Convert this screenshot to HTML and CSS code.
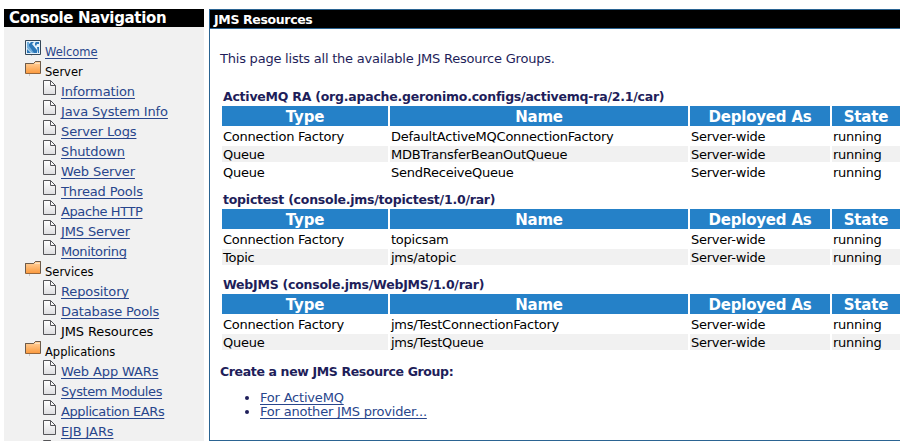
FILE: index.html
```
<!DOCTYPE html>
<html lang="en">
<head>
<meta charset="utf-8">
<title>JMS Resources</title>
<link rel="stylesheet" href="styles.css">
</head>
<body>
<svg class="defs" aria-hidden="true">
  <defs>
    <linearGradient id="orange" x1="0" y1="0" x2="0" y2="1"><stop offset="0" stop-color="#ffd3a0"/><stop offset="1" stop-color="#fb993c"/></linearGradient>
    <linearGradient id="paper" x1="0" y1="0" x2="0" y2="1"><stop offset="0" stop-color="#fff"/><stop offset="1" stop-color="#dedee0"/></linearGradient>
    <symbol id="folder" viewBox="0 0 16 16"><path d="M4.500 13v2" stroke="#c8c8c8"/><path d="M.5 12.500v-10h8l2-2h5v12z" fill="url(#orange)" stroke="#98673b"/><path d="M.5 12V2.500h8l2-2h5V12" fill="none" stroke="#6b5b4b"/><path d="M10 2.500h5" stroke="#fbe1c1"/></symbol>
    <symbol id="file" viewBox="0 0 13 15"><path d="M.5.5h7l5 5v9H.5z" fill="url(#paper)" stroke="#555558"/><path d="M7.500.5v5h5" fill="none" stroke="#555558"/></symbol>
    <symbol id="home" viewBox="0 0 16 16"><path d="M6.500 15v1" stroke="#bbb"/><path d="M.5.5h15v14H.5z" fill="#e5f1fa" stroke="#344657"/><path d="M2 2h2v3l6 6v2H7L2 8z" fill="#70addb"/><path d="M6 2h3L7 4l5 6v3H9L4 6V4zM2 9l4 4H2zM10 3l1-1h3v2h-2l-1 2-1-1zM12 7h2v6h-1z" fill="#2c78b9"/></symbol>
  </defs>
</svg>
<div class="page">
  <nav class="sidebar">
    <h1>Console Navigation</h1>
    <ul class="tree">
      <li class="top"><svg class="icon"><use href="#home"/></svg><a href="#">Welcome</a></li>
      <li class="top"><svg class="icon"><use href="#folder"/></svg><span>Server</span></li>
      <li><svg class="file"><use href="#file"/></svg><a href="#">Information</a></li>
      <li><svg class="file"><use href="#file"/></svg><a href="#">Java System Info</a></li>
      <li><svg class="file"><use href="#file"/></svg><a href="#">Server Logs</a></li>
      <li><svg class="file"><use href="#file"/></svg><a href="#">Shutdown</a></li>
      <li><svg class="file"><use href="#file"/></svg><a href="#">Web Server</a></li>
      <li><svg class="file"><use href="#file"/></svg><a href="#">Thread Pools</a></li>
      <li><svg class="file"><use href="#file"/></svg><a href="#" class="tight">Apache HTTP</a></li>
      <li><svg class="file"><use href="#file"/></svg><a href="#">JMS Server</a></li>
      <li><svg class="file"><use href="#file"/></svg><a href="#" class="tight">Monitoring</a></li>
      <li class="top"><svg class="icon"><use href="#folder"/></svg><span>Services</span></li>
      <li><svg class="file"><use href="#file"/></svg><a href="#">Repository</a></li>
      <li><svg class="file"><use href="#file"/></svg><a href="#">Database Pools</a></li>
      <li><svg class="file"><use href="#file"/></svg><span>JMS Resources</span></li>
      <li class="top"><svg class="icon"><use href="#folder"/></svg><span>Applications</span></li>
      <li><svg class="file"><use href="#file"/></svg><a href="#">Web App WARs</a></li>
      <li><svg class="file"><use href="#file"/></svg><a href="#" class="tight">System Modules</a></li>
      <li><svg class="file"><use href="#file"/></svg><a href="#" class="tight">Application EARs</a></li>
      <li><svg class="file"><use href="#file"/></svg><a href="#">EJB JARs</a></li>
      <li><svg class="file"><use href="#file"/></svg></li>
    </ul>
  </nav>
  <main class="portlet">
    <h2>JMS Resources</h2>
    <p class="intro">This page lists all the available JMS Resource Groups.</p>
    <section class="group">
      <h3>ActiveMQ RA (org.apache.geronimo.configs/activemq-ra/2.1/car)</h3>
      <div class="row head"><span>Type</span><span>Name</span><span>Deployed As</span><span>State</span></div>
      <div class="row"><span>Connection Factory</span><span>DefaultActiveMQConnectionFactory</span><span>Server-wide</span><span>running</span></div>
      <div class="row alt"><span>Queue</span><span>MDBTransferBeanOutQueue</span><span>Server-wide</span><span>running</span></div>
      <div class="row"><span>Queue</span><span>SendReceiveQueue</span><span>Server-wide</span><span>running</span></div>
    </section>
    <section class="group">
      <h3>topictest (console.jms/topictest/1.0/rar)</h3>
      <div class="row head"><span>Type</span><span>Name</span><span>Deployed As</span><span>State</span></div>
      <div class="row"><span>Connection Factory</span><span>topicsam</span><span>Server-wide</span><span>running</span></div>
      <div class="row alt"><span>Topic</span><span>jms/atopic</span><span>Server-wide</span><span>running</span></div>
    </section>
    <section class="group">
      <h3>WebJMS (console.jms/WebJMS/1.0/rar)</h3>
      <div class="row head"><span>Type</span><span>Name</span><span>Deployed As</span><span>State</span></div>
      <div class="row"><span>Connection Factory</span><span>jms/TestConnectionFactory</span><span>Server-wide</span><span>running</span></div>
      <div class="row alt"><span>Queue</span><span>jms/TestQueue</span><span>Server-wide</span><span>running</span></div>
    </section>
    <h4>Create a new JMS Resource Group:</h4>
    <ul class="create">
      <li><a href="#">For ActiveMQ</a></li>
      <li><a href="#">For another JMS provider...</a></li>
    </ul>
  </main>
</div>
</body>
</html>
```
FILE: styles.css
```
* { box-sizing: border-box; margin: 0; padding: 0; }
body { background: #fff; color: #000; font: 13px/16px "DejaVu Sans", Verdana, sans-serif; overflow: hidden; }
.defs { display: block; width: 0; height: 0; }
.page { display: flex; gap: 5px; height: 441px; padding: 9px 0 0 4px; overflow: hidden; white-space: nowrap; }
.sidebar { flex: 0 0 200px; height: 432px; background: #f1f1f1; overflow: hidden; }
.sidebar h1 { height: 18px; padding-left: 5px; background: #000; color: #fff; font-size: 15px; line-height: 19px; letter-spacing: -.35px; }
.tree { list-style: none; padding: 13px 0 0 21px; }
.tree li { display: flex; height: 20px; gap: 5px; padding-left: 18px; line-height: 24px; letter-spacing: -.12px; }
.tree .tight { letter-spacing: -.4px; }
.tree .top { gap: 4px; padding-left: 0; font-size: 11.500px; line-height: 25px; letter-spacing: 0; }
a { color: #28468c; text-decoration: underline; text-underline-offset: 2px; text-decoration-thickness: 1px; text-decoration-skip-ink: none; }
.icon { flex: none; width: 16px; height: 16px; }
.top + .top .icon, li:not(.top) + .top .icon { margin-top: 1px; }
.file { flex: none; width: 13px; height: 15px; }
.portlet { flex: 0 0 700px; height: 432px; border: 1px solid #2b6492; border-right: 0; color: #1e1e5a; }
.portlet h2 { height: 19px; padding-left: 4px; background: #000; border-bottom: 1px solid #2b6492; color: #fff; font-size: 12.500px; line-height: 19px; letter-spacing: -.35px; }
.intro { padding: 22px 0 0 10px; height: 48px; letter-spacing: -.22px; }
.group { padding-left: 12px; margin-top: 11px; }
.group h3 { height: 18px; padding-left: 1px; font-size: 12.500px; line-height: 18px; letter-spacing: -.23px; }
.row { display: grid; grid-template: 100% / 166px 298px 140px 68px; column-gap: 2px; height: 16px; margin-top: 2px; color: #000; letter-spacing: -.24px; }
.row span { padding-left: 1px; line-height: 17px; }
.row.head { height: 20px; margin-top: 0; color: #fff; font-size: 15px; font-weight: bold; text-align: center; letter-spacing: -.2px; }
.row.head span { background: #2581c8; line-height: 22px; padding: 0; }
.alt span { background: #f1f1f1; }
.portlet h4 { margin: 12px 0 0 10px; font-size: 12.500px; line-height: 19px; letter-spacing: -.36px; }
.create { margin: 10px 0 0 50px; line-height: 14px; letter-spacing: -.2px; }
.create li::marker { font-size: 13px; }
```
